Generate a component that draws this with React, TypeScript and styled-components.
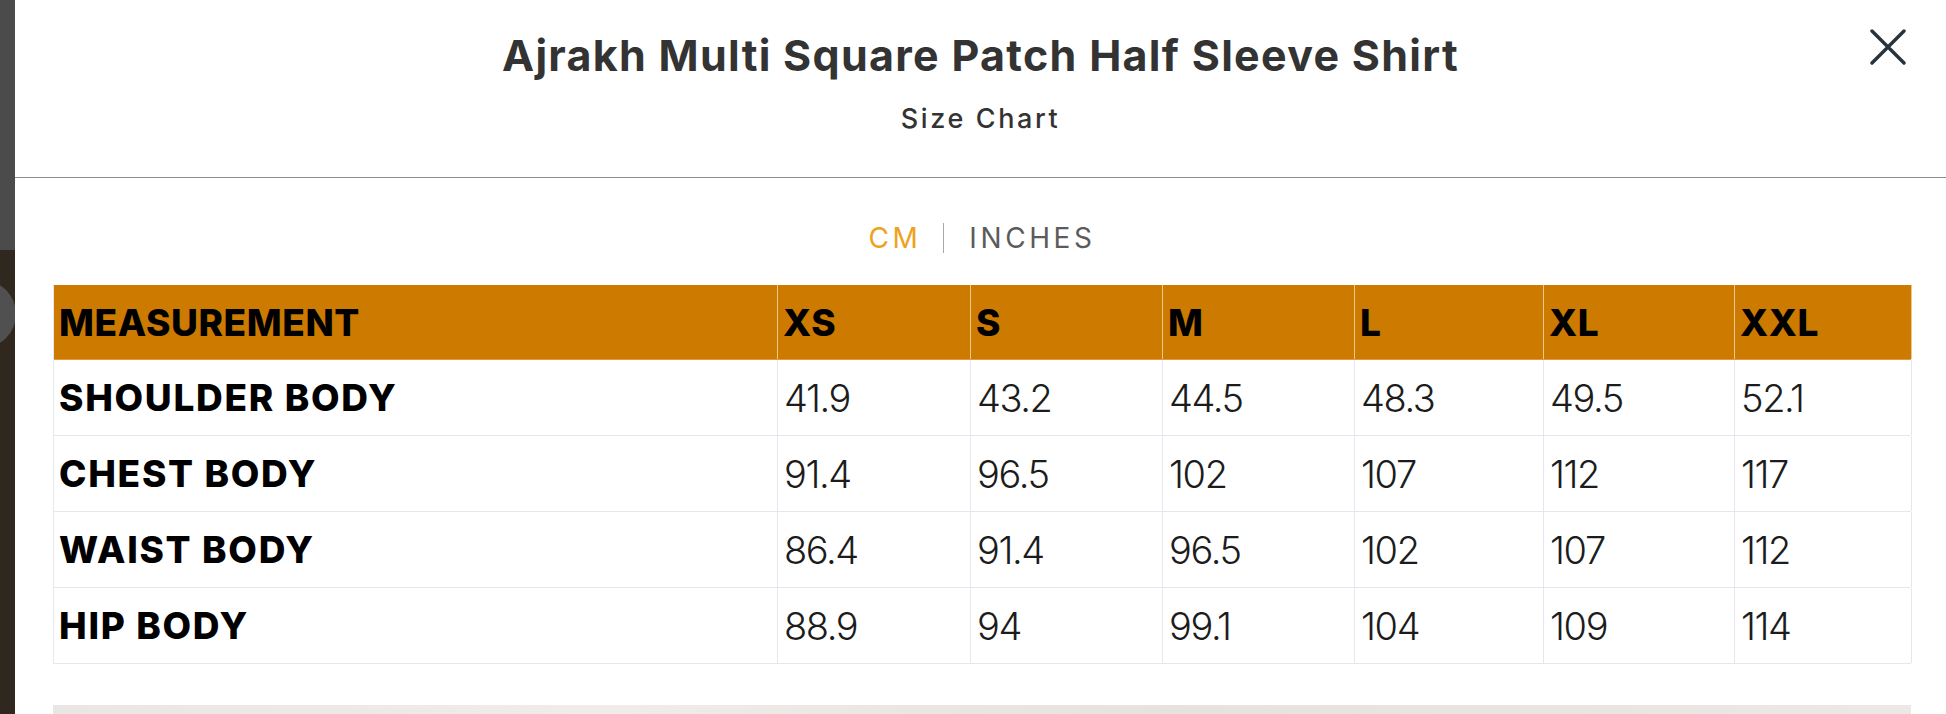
import React from "react";
import styled, { createGlobalStyle } from "styled-components";

const GlobalStyle = createGlobalStyle`
  * { box-sizing: border-box; }
  html, body { margin: 0; padding: 0; }
  body {
    width: 1946px;
    height: 714px;
    overflow: hidden;
    font-family: Inter, "Noto Sans", Arial, sans-serif;
  }
`;

const COLS = "724px 193px 192px 192px 189px 191px 177px";

const Page = styled.div`
  position: relative;
  display: flex;
  width: 1946px;
  height: 714px;
  background: linear-gradient(#4b4b4b 0 250px, #30281f 250px 100%);
  overflow: hidden;
`;

const SlideArrow = styled.div`
  position: absolute;
  left: -52px;
  top: 280px;
  width: 68px;
  height: 68px;
  border-radius: 50%;
  background: #505050;
`;

const Modal = styled.div`
  position: relative;
  z-index: 1;
  margin-left: 15px;
  flex: 1;
  display: flex;
  flex-direction: column;
  background: #ffffff;
  overflow: hidden;
`;

const Header = styled.header`
  flex-shrink: 0;
  display: grid;
  grid-template-columns: 1fr auto 1fr;
  align-items: start;
  height: 178px;
  border-bottom: 1px solid #8c8c8c;
`;

const TitleBlock = styled.div`
  grid-column: 2;
  display: flex;
  flex-direction: column;
  align-items: center;
  padding-top: 30px;
`;

const Title = styled.h1`
  margin: 0;
  font-family: Inter, "Noto Sans", sans-serif;
  font-weight: 700;
  font-size: 43px;
  line-height: 50px;
  color: #333333;
  letter-spacing: 1.3px;
  white-space: nowrap;
`;

const Subtitle = styled.div`
  margin-top: 23px;
  font-family: Inter, "Noto Sans", sans-serif;
  font-weight: 500;
  font-size: 27px;
  line-height: 32px;
  color: #333333;
  letter-spacing: 2.6px;
`;

const CloseButton = styled.button`
  grid-column: 3;
  justify-self: end;
  margin: 29px 40px 0 0;
  padding: 0;
  width: 36px;
  height: 36px;
  border: none;
  background: transparent;
  display: flex;
  align-items: center;
  justify-content: center;
  cursor: pointer;
`;

const Body = styled.div`
  flex-shrink: 0;
  display: flex;
  flex-direction: column;
  align-items: center;
  padding: 43px 35px 0 38px;
`;

const UnitToggle = styled.div`
  display: flex;
  align-items: center;
  gap: 25px;
  height: 34px;
`;

const Unit = styled.span<{ $active?: boolean }>`
  font-family: Inter, "Noto Sans", sans-serif;
  font-weight: 400;
  font-size: 28px;
  line-height: 34px;
  letter-spacing: 3.6px;
  color: ${(p) => (p.$active ? "#eea21c" : "#5b5b5b")};
  margin-right: ${(p) => (p.$active ? "-3px" : "0")};
`;

const UnitDivider = styled.span`
  width: 1px;
  height: 30px;
  background: #a8a8a8;
`;

const Table = styled.div`
  margin-top: 30px;
  width: 1858px;
  display: flex;
  flex-direction: column;
  border-left: 1px solid #e6e6ee;
`;

const Row = styled.div<{ $head?: boolean }>`
  display: grid;
  grid-template-columns: ${COLS};
  height: ${(p) => (p.$head ? "75px" : "76px")};
  background: ${(p) => (p.$head ? "#cc7a00" : "#ffffff")};
  border-bottom: 1px solid ${(p) => (p.$head ? "#e59a3a" : "#e4e6ee")};
`;

const Cell = styled.div<{ $head?: boolean; $label?: boolean }>`
  display: flex;
  align-items: center;
  padding-left: ${(p) => (p.$label || p.$head ? "5px" : "6px")};
  border-right: 1px solid ${(p) => (p.$head ? "#efc78c" : "#e6e6ee")};
  color: #000000;
  white-space: nowrap;
  font-family: Inter, "Noto Sans", sans-serif;
  font-size: ${(p) => (p.$head || p.$label ? "37px" : "38px")};
  font-weight: ${(p) => (p.$head || p.$label ? 800 : 300)};
  letter-spacing: ${(p) => (p.$head ? "0.6px" : p.$label ? "1.7px" : "-1.4px")};
  ${(p) => (!p.$head && !p.$label ? "color: #1c1c1c;" : "")}
`;

const Photo = styled.div`
  margin-top: 41px;
  width: 1858px;
  height: 40px;
  background: linear-gradient(90deg, #e9e6e3, #efece9 30%, #e6e2de 60%, #ebe8e5);
`;

const sizes = ["XS", "S", "M", "L", "XL", "XXL"];
const rows: { label: string; values: string[] }[] = [
  { label: "SHOULDER BODY", values: ["41.9", "43.2", "44.5", "48.3", "49.5", "52.1"] },
  { label: "CHEST BODY", values: ["91.4", "96.5", "102", "107", "112", "117"] },
  { label: "WAIST BODY", values: ["86.4", "91.4", "96.5", "102", "107", "112"] },
  { label: "HIP BODY", values: ["88.9", "94", "99.1", "104", "109", "114"] },
];

export default function App() {
  return (
    <>
      <GlobalStyle />
      <Page>
        <SlideArrow />
        <Modal>
          <Header>
            <TitleBlock>
              <Title>Ajrakh Multi Square Patch Half Sleeve Shirt</Title>
              <Subtitle>Size Chart</Subtitle>
            </TitleBlock>
            <CloseButton aria-label="Close">
              <svg width="36" height="36" viewBox="0 0 36 36" fill="none">
                <path d="M2 2 L34 34 M34 2 L2 34" stroke="#27333d" strokeWidth="3.4" strokeLinecap="round" />
              </svg>
            </CloseButton>
          </Header>
          <Body>
            <UnitToggle>
              <Unit $active>CM</Unit>
              <UnitDivider />
              <Unit>INCHES</Unit>
            </UnitToggle>
            <Table>
              <Row $head>
                <Cell $head>MEASUREMENT</Cell>
                {sizes.map((s) => (
                  <Cell $head key={s}>{s}</Cell>
                ))}
              </Row>
              {rows.map((r) => (
                <Row key={r.label}>
                  <Cell $label>{r.label}</Cell>
                  {r.values.map((v, i) => (
                    <Cell key={i}>{v}</Cell>
                  ))}
                </Row>
              ))}
            </Table>
            <Photo />
          </Body>
        </Modal>
      </Page>
    </>
  );
}
